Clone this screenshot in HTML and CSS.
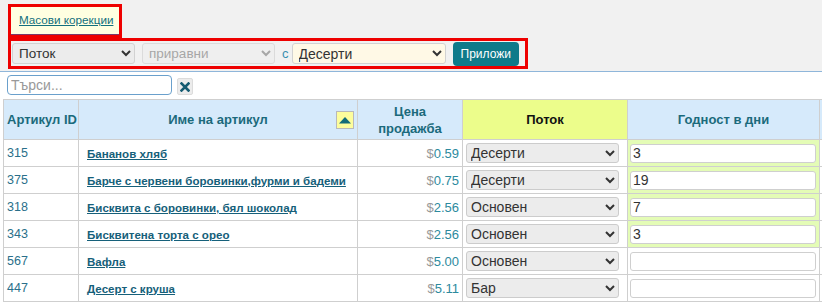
FILE: index.html
```html
<!DOCTYPE html>
<html lang="bg">
<head>
  <meta charset="UTF-8">
  <title>Масови корекции</title>
  <link rel="stylesheet" href="styles.css">
</head>
<body>
  <!-- Toolbar -->
  <div class="toolbar">
    <div class="mark tab-mark">
      <a href="#" class="tab">Масови корекции</a>
    </div>
    <div class="mark bulk">
      <select class="sel sel-field">
        <option>Поток</option>
      </select>
      <select class="sel sel-op" disabled>
        <option>приравни</option>
      </select>
      <span class="with">с</span>
      <select class="sel sel-value">
        <option>Десерти</option>
      </select>
      <button class="apply">Приложи</button>
    </div>
  </div>

  <!-- Search -->
  <div class="search">
    <input type="text" class="search-input" placeholder="Търси...">
    <button class="clear" title="Изчисти">
      <svg width="10" height="10" viewBox="0 0 10 10"><path d="M1.5 1.5 L8.5 8.5 M8.5 1.5 L1.5 8.5" stroke="#165c72" stroke-width="2.6" stroke-linecap="square"/></svg>
    </button>
  </div>

  <!-- Items table -->
  <table class="items">
    <colgroup>
      <col style="width:75px">
      <col style="width:279px">
      <col style="width:105px">
      <col style="width:165px">
      <col style="width:192px">
      <col style="width:80px">
    </colgroup>
    <thead>
      <tr>
        <th>Артикул ID</th>
        <th class="th-name">Име на артикул <span class="sort"><svg width="14" height="8" viewBox="0 0 14 8"><path d="M1 7.5 L7 1 L13 7.5 Z" fill="#136c78"/></svg></span></th>
        <th>Цена<br>продажба</th>
        <th class="th-flow">Поток</th>
        <th>Годност в дни</th>
        <th></th>
      </tr>
    </thead>
    <tbody>
      <tr>
        <td class="id">315</td>
        <td><a href="#" class="name">Бананов хляб</a></td>
        <td class="price"><span class="cur">$</span>0.59</td>
        <td class="flow"><select class="cell-sel"><option>Десерти</option></select></td>
        <td class="days filled"><input class="cell-input" value="3"></td>
        <td></td>
      </tr>
      <tr>
        <td class="id">375</td>
        <td><a href="#" class="name">Барче с червени боровинки,фурми и бадеми</a></td>
        <td class="price"><span class="cur">$</span>0.75</td>
        <td class="flow"><select class="cell-sel"><option>Десерти</option></select></td>
        <td class="days filled"><input class="cell-input" value="19"></td>
        <td></td>
      </tr>
      <tr>
        <td class="id">318</td>
        <td><a href="#" class="name">Бисквита с боровинки, бял шоколад</a></td>
        <td class="price"><span class="cur">$</span>2.56</td>
        <td class="flow"><select class="cell-sel"><option>Основен</option></select></td>
        <td class="days filled"><input class="cell-input" value="7"></td>
        <td></td>
      </tr>
      <tr>
        <td class="id">343</td>
        <td><a href="#" class="name">Бисквитена торта с орео</a></td>
        <td class="price"><span class="cur">$</span>2.56</td>
        <td class="flow"><select class="cell-sel"><option>Основен</option></select></td>
        <td class="days filled"><input class="cell-input" value="3"></td>
        <td></td>
      </tr>
      <tr>
        <td class="id">567</td>
        <td><a href="#" class="name">Вафла</a></td>
        <td class="price"><span class="cur">$</span>5.00</td>
        <td class="flow"><select class="cell-sel"><option>Основен</option></select></td>
        <td class="days"><input class="cell-input" value=""></td>
        <td></td>
      </tr>
      <tr>
        <td class="id">447</td>
        <td><a href="#" class="name">Десерт с круша</a></td>
        <td class="price"><span class="cur">$</span>5.11</td>
        <td class="flow"><select class="cell-sel"><option>Бар</option></select></td>
        <td class="days"><input class="cell-input" value=""></td>
        <td></td>
      </tr>
    </tbody>
  </table>
</body>
</html>
```

FILE: styles.css
```css
/* General */
body {
  margin: 0;
  font-family: "Liberation Sans", Arial, sans-serif;
  font-size: 13px;
  color: #333;
  background: #fff;
  overflow: hidden;
}

/* Toolbar */
.toolbar {
  background: #f1f1f1;
  height: 72px;
  border-bottom: 1px solid #8fb6da;
  padding: 4px 0 0 8px;
  box-sizing: border-box;
}

.mark {
  border: 3px solid #ee0000;
}

.tab-mark {
  display: inline-block;
  width: 108px;
  height: 28px;
}

.tab {
  display: block;
  height: 27px;
  line-height: 26px;
  padding-left: 8px;
  background: #ffffe1;
  border-bottom: 1px solid #7a3a6a;
  color: #13707e;
  font-size: 11.7px;
}

.bulk {
  display: flex;
  align-items: center;
  gap: 7px;
  width: 513px;
  height: 25px;
  padding-left: 1px;
}

.sel {
  height: 21px;
  font-family: inherit;
  font-size: 13.5px;
  color: #333;
  background: #ececec;
  border: 1px solid #d2d2d2;
  border-radius: 3px;
  padding: 0 2px;
}

.sel-field { width: 123px; }

.sel-op {
  width: 133px;
  color: #888;
  background: #efefef;
}

.with {
  color: #3a8fb0;
  font-size: 13px;
  margin: 0 -4px 0 0;
}

.sel-value {
  width: 154px;
  background: #fff9e6;
  font-size: 14px;
}

.apply {
  height: 24px;
  padding: 0 8px;
  background: #0f7a8a;
  color: #fff;
  border: none;
  border-radius: 4px;
  font-family: inherit;
  font-size: 12px;
}

/* Search */
.search {
  display: flex;
  align-items: center;
  gap: 5px;
  padding: 1px 0 0 7px;
  height: 24px;
}

.search-input {
  width: 165px;
  height: 20px;
  box-sizing: border-box;
  border: 1px solid #6aa0cc;
  border-radius: 4px;
  padding: 0 3px;
  font-family: inherit;
  font-size: 14px;
}

.search-input::placeholder {
  color: #999;
}

.clear {
  width: 16px;
  height: 17px;
  margin-top: 3px;
  padding: 0;
  background: #ececec;
  border: 1px solid #dcdcdc;
  border-radius: 2px;
  display: flex;
  align-items: center;
  justify-content: center;
}

/* Table */
.items {
  border-collapse: collapse;
  table-layout: fixed;
  width: 896px;
  margin: 2px 0 0 3px;
}

.items th,
.items td {
  border: 1px solid #cfcfcf;
  padding: 0 2px;
  white-space: nowrap;
  overflow: hidden;
}

.items th {
  height: 39px;
  background: #d6eafb;
  color: #1b6a7c;
  font-size: 13px;
  font-weight: bold;
  text-align: center;
  line-height: 17px;
}

.items th:first-child {
  text-align: left;
  padding-left: 3px;
}

.th-name {
  position: relative;
}

.sort {
  position: absolute;
  right: 3px;
  top: 11px;
  width: 16px;
  height: 16px;
  background: #fdfd9c;
  border: 1px solid #b9b9b9;
  display: flex;
  align-items: center;
  justify-content: center;
}

.items th.th-flow {
  background: #ecfd8b;
  color: #111;
}

.items td {
  height: 26px;
}

.id {
  color: #2a6f8a;
  font-size: 12.5px;
}

.items td.id {
  padding-left: 3px;
}

.name {
  color: #16607a;
  font-weight: bold;
  font-size: 11.55px;
  padding-left: 6px;
}

.price {
  text-align: right;
  color: #2d8a9e;
}

.items td.price {
  padding-right: 3px;
}

.cur {
  color: #999;
}

.items td.flow {
  padding-left: 3px;
}

.cell-sel {
  width: 153px;
  height: 20px;
  background: #ececec;
  border: 1px solid #cccccc;
  border-radius: 3px;
  font-family: inherit;
  font-size: 14px;
  color: #333;
}

.days.filled {
  background: #e4fcb6;
}

.cell-input {
  width: 186px;
  height: 19px;
  box-sizing: border-box;
  border: 1px solid #cfcfcf;
  border-radius: 3px;
  padding: 0 2px;
  font-family: inherit;
  font-size: 14px;
  color: #333;
}
```
